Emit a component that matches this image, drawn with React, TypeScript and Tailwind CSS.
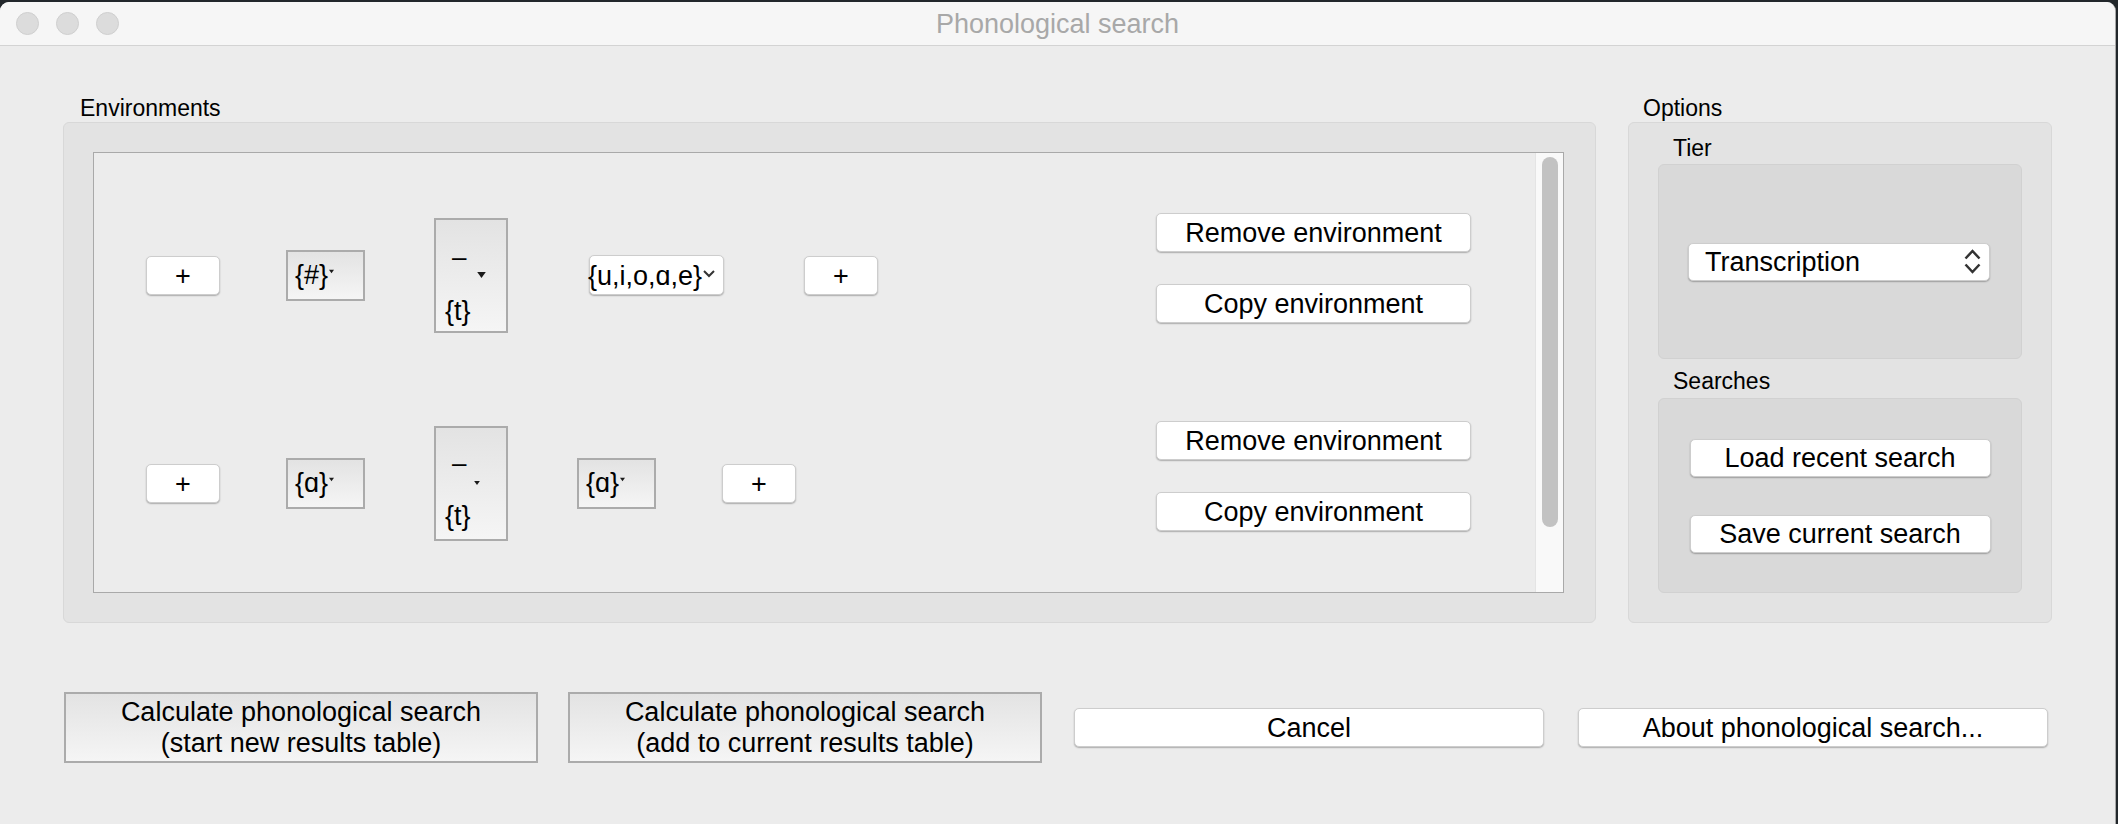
import React from "react";

const whiteBase =
  "bg-white rounded-[5px] border border-[#cdcdcd] shadow-[0_1px_1.5px_rgba(0,0,0,0.28)] flex items-center pt-[2px] text-[27px] leading-none text-black";
const whiteBtn = `${whiteBase} justify-center`;

const boxed =
  "border-2 border-[#ababab] bg-gradient-to-b from-[#e3e3e3] to-[#f5f5f5]";

const SmallTriangle: React.FC<{ w: number; h: number }> = ({ w, h }) => (
  <svg width={w} height={h} viewBox="0 0 10 7" className="block">
    <polygon points="0,0 10,0 5,7" fill="#1a1a1a" />
  </svg>
);

const PlusButton: React.FC<{ className?: string }> = ({ className = "" }) => (
  <button className={`${whiteBtn} w-[74px] h-[39px] shrink-0 ${className}`}>+</button>
);

const Combo: React.FC<{ label: string; className?: string }> = ({ label, className = "" }) => (
  <div className={`${boxed} w-[79px] h-[51px] shrink-0 flex items-center pl-[7px] ${className}`}>
    <span className="text-[27px] leading-none">{label}</span>
    <span className="ml-[1px] mb-[8px]">
      <SmallTriangle w={5} h={5} />
    </span>
  </div>
);

const TallCombo: React.FC<{ big?: boolean; className?: string }> = ({ big, className = "" }) => (
  <div className={`${boxed} w-[74px] h-[115px] shrink-0 flex flex-col pl-[9px] ${className}`}>
    <div className={`h-[26px] pl-[7px] text-[26px] leading-[26px] ${big ? "mt-[24px]" : "mt-[22px]"}`}>–</div>
    <div className={`flex justify-end ${big ? "mt-[2px] h-[6px] pr-[20px]" : "mt-[5px] h-[4px] pr-[26px]"}`}>
      {big ? <SmallTriangle w={9} h={6} /> : <SmallTriangle w={6} h={4} />}
    </div>
    <div className={`text-[27px] leading-[26px] ${big ? "mt-[20px]" : "mt-[18px]"}`}>{"{t}"}</div>
  </div>
);

const EnvButtons: React.FC = () => (
  <div className="ml-auto w-[315px] shrink-0 flex flex-col gap-[32px] mb-[15px]">
    <button className={`${whiteBtn} h-[39px]`}>Remove environment</button>
    <button className={`${whiteBtn} h-[39px]`}>Copy environment</button>
  </div>
);

const App: React.FC = () => {
  return (
    <div className="w-[2118px] h-[824px] bg-[#22272b] pt-[2px] overflow-hidden font-['Liberation_Sans',Arial,sans-serif] text-black">
      <div className="w-[2116px] h-[822px] bg-[#ececec] rounded-t-[9px] border-r border-[#a8a8a8] flex flex-col overflow-hidden">
        {/* Title bar */}
        <div className="h-[44px] shrink-0 bg-[#f6f6f6] border-b border-[#d3d3d3] grid grid-cols-[1fr_auto_1fr] items-center">
          <div className="flex items-center gap-[17px] pl-[16px]">
            <span className="w-[23px] h-[23px] rounded-full bg-[#dcdcdc] border border-[#cfcfcf]" />
            <span className="w-[23px] h-[23px] rounded-full bg-[#dcdcdc] border border-[#cfcfcf]" />
            <span className="w-[23px] h-[23px] rounded-full bg-[#dcdcdc] border border-[#cfcfcf]" />
          </div>
          <div className="text-[27px] leading-none text-[#a8a8a8] pt-[2px]">Phonological search</div>
          <div />
        </div>

        {/* Content */}
        <div className="flex-1 pl-[63px] pt-[49px]">
          <div className="flex gap-[32px]">
            {/* Environments */}
            <div className="w-[1533px] shrink-0">
              <div className="h-[27px] pl-[17px] text-[23px] leading-[27px]">Environments</div>
              <div className="h-[501px] rounded-[6px] bg-[#e3e3e3] border border-[#d8d8d8] pl-[29px] pr-[31px] pt-[29px] pb-[29px]">
                <div className="h-full flex border border-[#a9a9a9] bg-[#ececec]">
                  <div className="flex-1 pt-[18px]">
                    <div className="h-[208px] flex items-center pl-[52px] pr-[64px]">
                      <PlusButton />
                      <Combo label="{#}" className="ml-[66px]" />
                      <TallCombo big className="ml-[69px]" />
                      <div className={`${whiteBase} justify-start ml-[81px] w-[135px] h-[40px] shrink-0 overflow-visible`}>
                        <span className="-ml-[2px] text-[27px] leading-none whitespace-nowrap">{"{u,i,o,ɑ,e}"}</span>
                        <svg width="12" height="8" viewBox="0 0 12 8" className="ml-[1px] mb-[5px] shrink-0">
                          <polyline points="1,1 6,6 11,1" fill="none" stroke="#333" strokeWidth="2" />
                        </svg>
                      </div>
                      <PlusButton className="ml-[80px]" />
                      <EnvButtons />
                    </div>
                    <div className="h-[208px] flex items-center pl-[52px] pr-[64px]">
                      <PlusButton />
                      <Combo label="{ɑ}" className="ml-[66px]" />
                      <TallCombo className="ml-[69px]" />
                      <Combo label="{ɑ}" className="ml-[69px]" />
                      <PlusButton className="ml-[66px]" />
                      <EnvButtons />
                    </div>
                  </div>
                  <div className="w-[28px] shrink-0 bg-[#f9f9f9] border-l border-[#e4e4e4] pt-[4px] flex justify-center">
                    <div className="w-[16px] h-[370px] rounded-full bg-[#c2c2c2]" />
                  </div>
                </div>
              </div>
            </div>

            {/* Options */}
            <div className="w-[424px] shrink-0">
              <div className="h-[27px] pl-[15px] text-[23px] leading-[27px]">Options</div>
              <div className="h-[501px] rounded-[6px] bg-[#e3e3e3] border border-[#d8d8d8] px-[29px] pt-[12px]">
                <div className="h-[27px] pl-[15px] text-[23px] leading-[27px]">Tier</div>
                <div className="mt-[2px] h-[195px] rounded-[6px] bg-[#d9d9d9] border border-[#d1d1d1] flex items-center pl-[29px]">
                  <div className={`${whiteBase} justify-between w-[302px] h-[38px] pl-[16px] pr-[8px]`}>
                    <span>Transcription</span>
                    <svg width="17" height="27" viewBox="0 0 17 27" className="-mt-[2px]">
                      <polyline points="1.5,10.5 8.5,3 15.5,10.5" fill="none" stroke="#333" strokeWidth="2.5" />
                      <polyline points="1.5,16.5 8.5,24 15.5,16.5" fill="none" stroke="#333" strokeWidth="2.5" />
                    </svg>
                  </div>
                </div>
                <div className="mt-[9px] h-[27px] pl-[15px] text-[23px] leading-[27px]">Searches</div>
                <div className="mt-[3px] h-[195px] rounded-[6px] bg-[#d9d9d9] border border-[#d1d1d1] flex flex-col items-center justify-center gap-[38px]">
                  <button className={`${whiteBtn} w-[301px] h-[38px]`}>Load recent search</button>
                  <button className={`${whiteBtn} w-[301px] h-[38px]`}>Save current search</button>
                </div>
              </div>
            </div>
          </div>

          {/* Bottom buttons */}
          <div className="mt-[69px] ml-[1px] w-[1986px] h-[71px] grid grid-cols-4 gap-[30px] items-center">
            <button className={`${boxed} h-[71px] text-[27px] leading-[31px] text-center`}>
              Calculate phonological search
              <br />
              (start new results table)
            </button>
            <button className={`${boxed} h-[71px] text-[27px] leading-[31px] text-center`}>
              Calculate phonological search
              <br />
              (add to current results table)
            </button>
            <button className={`${whiteBtn} h-[39px] mx-[2px]`}>Cancel</button>
            <button className={`${whiteBtn} h-[39px] mx-[2px]`}>About phonological search...</button>
          </div>
        </div>
      </div>
    </div>
  );
};

export default App;
